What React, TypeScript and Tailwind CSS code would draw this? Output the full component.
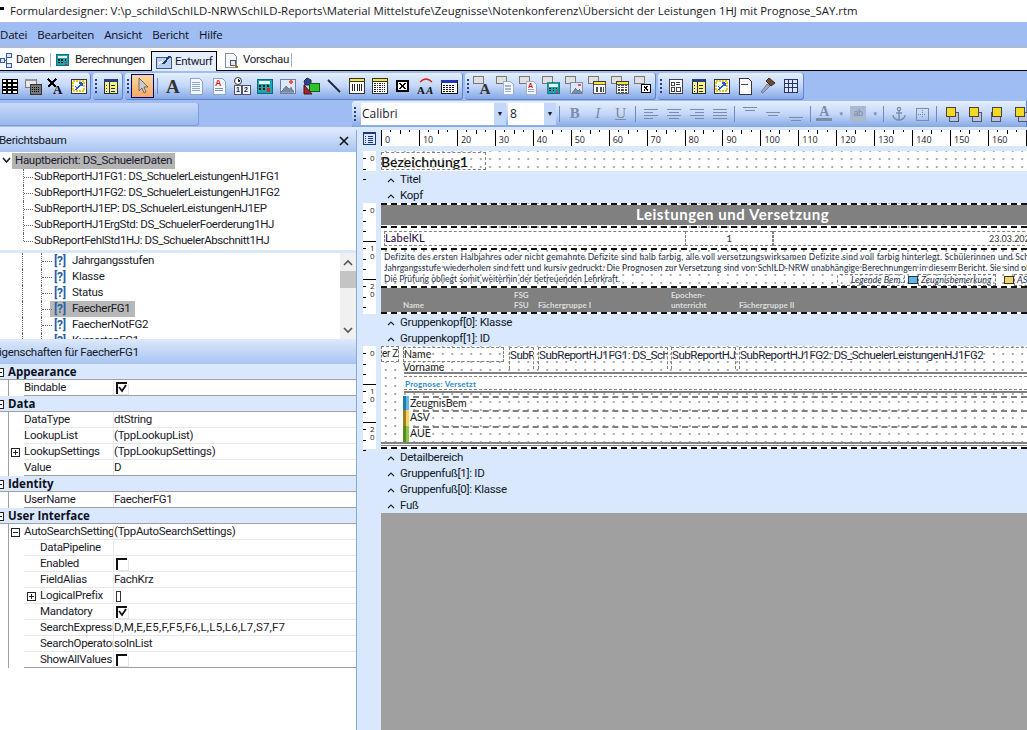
import React from 'react';

const segoe = "font-['Open_Sans',sans-serif] tracking-normal";
const ui = "font-['Roboto',sans-serif]";
const calibri = "font-['Lato',sans-serif] tracking-normal";

const Svg = ({ children }: { children: React.ReactNode }) => (
  <svg width="18" height="18" viewBox="0 0 18 18" shapeRendering="crispEdges">{children}</svg>
);

// toolbar icons
const IGrid = () => (
  <Svg>
    <rect x="1" y="2" width="15" height="14" fill="#fff" stroke="#000" />
    <path d="M1 6h15M1 10h15M1 13h15M6 2v14M11 2v14" stroke="#000" strokeWidth="1.4" />
  </Svg>
);
const ICalcWin = () => (
  <Svg>
    <rect x="1" y="2" width="11" height="8" fill="#e8e8e8" stroke="#777" />
    <rect x="1" y="2" width="11" height="2" fill="#999" />
    <rect x="6" y="7" width="11" height="10" fill="#777" stroke="#333" />
    <path d="M8 10h7M8 12h7M8 14h7" stroke="#000" strokeDasharray="1 1" />
  </Svg>
);
const IXA = () => (
  <Svg>
    <path d="M1 2l8 8M9 2l-8 8" stroke="#000" strokeWidth="1.8" />
    <text x="6" y="17" fontFamily="Liberation Serif" fontWeight="700" fontSize="13" fill="#000">A</text>
  </Svg>
);
const IVars = () => (
  <Svg>
    <rect x="1" y="2" width="15" height="14" fill="#fff" stroke="#333" />
    <path d="M3 4h11v10H3z" fill="none" stroke="#e8c820" strokeWidth="1.5" strokeDasharray="2 1" />
    <path d="M6 13l6-7M12 6H9M12 6v3M5 9l3 3" fill="none" stroke="#1c5fd0" strokeWidth="1.4" />
  </Svg>
);
const IColumns = () => (
  <Svg>
    <rect x="2" y="2" width="13" height="14" fill="#fff27a" stroke="#1c2a55" />
    <rect x="2" y="2" width="13" height="3" fill="#26407e" />
    <path d="M7 5v11M4 8h1M4 11h1M4 14h1M9 8h4M9 11h4M9 14h4" stroke="#1c2a55" />
  </Svg>
);
const IArrow = () => (
  <Svg>
    <path d="M5 1v13l3-3 2 5 2-1-2-5h4z" fill="#c8c8d0" stroke="#555" strokeWidth="0.8" shapeRendering="auto" />
  </Svg>
);
const IA = () => (
  <Svg>
    <text x="2" y="16" fontFamily="Liberation Serif" fontWeight="700" fontSize="19" fill="#333">A</text>
  </Svg>
);
const IDoc = () => (
  <Svg>
    <path d="M3 1h9l3 3v13H3z" fill="#f4f8ff" stroke="#8ea6c8" />
    <path d="M5 5h8M5 7h8M5 9h8M5 11h8M5 13h8" stroke="#8ea6c8" />
  </Svg>
);
const IDocA = () => (
  <Svg>
    <path d="M3 1h9l3 3v13H3z" fill="#f4f8ff" stroke="#8ea6c8" />
    <text x="5" y="9" fontFamily="Liberation Sans" fontWeight="700" fontSize="9" fill="#e01818">A</text>
    <path d="M5 11h8M5 13h8" stroke="#7a90c0" />
  </Svg>
);
const IClock = () => (
  <Svg>
    <circle cx="5" cy="4" r="3.5" fill="#fff" stroke="#333" shapeRendering="auto" />
    <path d="M5 2v2h2" stroke="#333" />
    <rect x="1" y="8" width="7" height="9" fill="#eef4ff" stroke="#556" />
    <rect x="9" y="8" width="8" height="9" fill="#eef4ff" stroke="#556" />
    <text x="3" y="15" fontFamily="Liberation Sans" fontWeight="700" fontSize="7" fill="#224">1</text>
    <text x="11" y="15" fontFamily="Liberation Sans" fontWeight="700" fontSize="7" fill="#224">2</text>
  </Svg>
);
const ICalc = () => (
  <Svg>
    <rect x="1" y="2" width="15" height="14" fill="#1aa6b0" stroke="#0c6a78" />
    <rect x="3" y="4" width="11" height="3" fill="#e8ffff" />
    <path d="M3 9h2M7 9h2M11 9h2M3 12h2M7 12h2" stroke="#111" strokeWidth="1.5" />
    <path d="M11 12h3M11 14h3" stroke="#e02020" strokeWidth="1.2" />
  </Svg>
);
const IImage = () => (
  <Svg>
    <rect x="1" y="2" width="15" height="14" fill="#dce8fa" stroke="#6c7ea0" />
    <path d="M2 15l5-6 3 3 2-2 3 5z" fill="#7a8aa0" stroke="#556" strokeWidth="0.5" />
    <circle cx="12" cy="5" r="1.7" fill="#e85a3a" />
  </Svg>
);
const IShapes = () => (
  <Svg>
    <path d="M2 4l3-3 4 2v5H3z" fill="#2a4488" stroke="#1c2a55" shapeRendering="auto" />
    <rect x="7" y="6" width="10" height="8" fill="#30c030" stroke="#106010" />
    <path d="M2 8v9h8z" fill="#a02828" stroke="#501010" shapeRendering="auto" />
  </Svg>
);
const ILine = () => (
  <Svg>
    <path d="M3 3l12 12" stroke="#1a2438" strokeWidth="1.8" shapeRendering="auto" />
  </Svg>
);
const IBars = () => (
  <Svg>
    <rect x="1" y="1" width="15" height="15" fill="#fff" stroke="#333" />
    <rect x="1" y="1" width="15" height="3" fill="#f5e53a" stroke="#333" />
    <path d="M4 7v7M6 7v7M9 7v7M11 7v7M13 7v7" stroke="#222" />
  </Svg>
);
const INoise = () => (
  <Svg>
    <rect x="1" y="1" width="15" height="15" fill="#fff" stroke="#333" />
    <rect x="1" y="1" width="15" height="3" fill="#f5e53a" stroke="#333" />
    <path d="M3 6h11M3 8h11M3 10h11M3 12h11M3 14h11" stroke="#222" strokeDasharray="2 1 1 1" />
  </Svg>
);
const IXBox = () => (
  <Svg>
    <rect x="3" y="4" width="11" height="10" fill="#fff" stroke="#000" strokeWidth="1.4" />
    <path d="M6 6l5 6M11 6l-5 6" stroke="#000" strokeWidth="1.5" />
  </Svg>
);
const IAA = () => (
  <Svg>
    <path d="M3 5Q9 -1 15 5" fill="none" stroke="#e01818" strokeWidth="1.2" shapeRendering="auto" />
    <text x="0" y="17" fontFamily="Liberation Serif" fontWeight="700" fontSize="11" fill="#111">A</text>
    <text x="9" y="17" fontFamily="Liberation Serif" fontStyle="italic" fontWeight="700" fontSize="11" fill="#111">A</text>
  </Svg>
);
const ICal = () => (
  <Svg>
    <rect x="1" y="3" width="16" height="13" fill="#fff" stroke="#111" />
    <rect x="1" y="3" width="16" height="3" fill="#2038b0" />
    <path d="M3 8h12M3 10h12M3 12h12M3 14h12" stroke="#111" strokeDasharray="2 1" />
  </Svg>
);
// gray window behind the data-aware variants
const Stacked = ({ children }: { children: React.ReactNode }) => (
  <span className="relative block h-[20px] w-[20px]">
    <span className="absolute left-0 top-0 h-[8px] w-[11px] border border-[#777] bg-[#e0e0e0]" />
    <span className="absolute left-[5px] top-[5px] block h-[18px] w-[18px] origin-top-left scale-[0.8]">{children}</span>
  </span>
);
const ICard = () => (
  <Svg>
    <rect x="2" y="2" width="13" height="14" fill="#fff" stroke="#444" />
    <path d="M4 5h3v3H4zM9 5h4M9 7h4M4 10h3v4H4zM9 10h4v4H9z" fill="none" stroke="#445" />
  </Svg>
);
const IPage = () => (
  <Svg>
    <path d="M3 1h9l3 3v13H3z" fill="#fff" stroke="#334" />
    <path d="M5 7l1 1 1-1 1 1 1-1 1 1 1-1 1 1" fill="none" stroke="#445" />
  </Svg>
);
const IBrush = () => (
  <Svg>
    <path d="M10 1l6 5-4 3-5-5z" fill="#6b4a30" stroke="#3a2818" shapeRendering="auto" />
    <path d="M8 7l3 2-7 7-2-1z" fill="#9aa8c0" stroke="#556" strokeWidth="0.6" shapeRendering="auto" />
  </Svg>
);
const ITable = () => (
  <Svg>
    <rect x="2" y="2" width="13" height="13" fill="#dbe6fa" stroke="#26336e" />
    <path d="M2 6.5h13M2 10.5h13M6.5 2v13M10.5 2v13" stroke="#26336e" />
  </Svg>
);

const Btn = ({ children, active }: { children?: React.ReactNode; active?: boolean }) => (
  <div
    className={`flex h-[24px] w-[23px] shrink-0 items-center justify-center ${
      active ? 'border border-[#000080] bg-gradient-to-b from-[#fdd9a0] to-[#f8a860]' : ''
    }`}
  >
    {children}
  </div>
);
const Grip = () => (
  <div className="ml-[2px] mr-[1px] flex h-[14px] w-[3px] shrink-0 flex-col justify-between">
    {[0, 1, 2, 3].map((i) => (
      <span key={i} className="h-[2px] w-[2px] bg-[#27418a]" />
    ))}
  </div>
);
const Sep = () => <div className="mx-[3px] h-[16px] w-px shrink-0 bg-[#6a8cc8]" />;

const barClass =
  'flex h-[27px] items-center rounded-r-[3px] border-b border-r border-[#5f85c8] bg-gradient-to-b from-[#e4eefd] via-[#c3d7f8] to-[#86a8e6]';

const Ruler = () => (
  <div className="flex h-[16px] min-w-0 flex-1 overflow-hidden bg-white">
    {Array.from({ length: 18 }, (_, i) => i * 10).map((n) => (
      <div key={n} className="relative h-full w-[37.95px] shrink-0 border-l border-black">
        <div className="flex h-[5px] items-start justify-evenly">
          <span className="h-[2px] w-px bg-black" />
          <span className="h-[4px] w-px bg-black" />
          <span className="h-[2px] w-px bg-black" />
        </div>
        <span className={`${segoe} block pl-[3px] text-[9px] leading-[10px] text-[#222]`}>{n}</span>
      </div>
    ))}
  </div>
);

const Chevron = () => (
  <svg width="8" height="6" viewBox="0 0 8 6" className="mr-[5px]">
    <path d="M1 5l3-3 3 3" fill="none" stroke="#1a2438" strokeWidth="1.1" />
  </svg>
);
const Section = ({ label }: { label: string }) => (
  <div className={`${ui} flex h-[16px] items-center pl-[27px] pt-[2px] text-[11.5px] leading-none text-[#111827]`}>
    <Chevron />
    <span>{label}</span>
  </div>
);

// marks of the vertical ruler next to a report band
const VRuler = ({ height, marks }: { height: number; marks: number }) => (
  <div className="relative ml-[3px] w-[13px] shrink-0 bg-white" style={{ height }}>
    {Array.from({ length: marks }, (_, m) => (
      <React.Fragment key={m}>
        {m > 0 && (
          <>
            <span className="absolute left-0 h-px w-full bg-black" style={{ top: 38 * m }} />
            <span className={`${segoe} absolute left-[7px] text-[8px] leading-[9px]`} style={{ top: 38 * m + 2 }}>{m}</span>
          </>
        )}
        <span className={`${segoe} absolute left-[7px] text-[8px] leading-[9px]`} style={{ top: 38 * m + (m ? 10 : 2) }}>0</span>
        {[7, 18, 28].map((t) => (
          <span key={t} className="absolute left-0 h-px w-[3px] bg-black" style={{ top: 38 * m + t }} />
        ))}
      </React.Fragment>
    ))}
  </div>
);

const dots =
  'bg-white bg-[radial-gradient(circle,#666_0.6px,transparent_0.8px)] bg-[length:9.5px_8px] bg-[position:0_-4px]';
const box = 'absolute border border-dashed border-[#808080]';
const blackDash = 'absolute left-0 right-0 h-0 border-t-2 border-dashed border-[#111]';
const grayRule = 'absolute left-[23px] right-0 h-[2px] bg-[#808080]';

const HeadBand = () => (
  <div className={`${calibri} relative h-[111px] min-w-0 flex-1 overflow-hidden ${dots}`}>
    <div className={`${blackDash} top-0`} />
    <div className="absolute left-0 right-0 top-[2px] flex h-[20px] items-center bg-[#808080] pb-[2px] pl-[255px]">
      <span className="whitespace-nowrap text-[15px] font-bold tracking-[0.55px] text-white">Leistungen und Versetzung</span>
    </div>
    <div className={`${blackDash} top-[23px]`} />
    <div className={`${box} left-[3px] top-[28px] h-[15px] w-[302px] bg-white text-[11px] leading-[11px] tracking-[0.2px] text-[#200040]`}>LabelKL</div>
    <div className={`${box} left-[304px] top-[28px] flex h-[15px] w-[88px] justify-end bg-white pr-[40px] text-[10px] leading-[13px] text-[#333]`}>1</div>
    <div className={`${box} left-[392px] top-[28px] h-[15px] w-[272px] whitespace-nowrap bg-white pl-[215px] text-[9px] leading-[13px] text-[#333]`}>23.03.2021</div>
    <div className={`${blackDash} top-[45px]`} />
    <div className="absolute left-[3px] top-[49px] whitespace-nowrap text-[8.5px] leading-[11px] text-[#26304a]">
      <div className="tracking-[0.21px]">Defizite des ersten Halbjahres oder nicht gemahnte Defizite sind halb farbig, alle voll versetzungswirksamen Defizite sind voll farbig hinterlegt. Schülerinnen und Schül</div>
      <div className="tracking-[0.1px]">Jahrgangsstufe wiederholen sind fett und kursiv gedruckt. Die Prognosen zur Versetzung sind von SchILD-NRW unabhängige Berechnungen in diesem Bericht. Sie sind oh</div>
      <div className="tracking-[0.02px]">Die Prüfung obliegt somit weiterhin der betreuenden Lehrkraft.</div>
    </div>
    <div className={`${box} left-[456px] top-[71px] h-[12px] w-[68px] rounded-[3px]`} />
    <span className="absolute left-[470px] top-[72px] whitespace-nowrap text-[9px] italic leading-[10px] text-[#26304a]">Legende Bem.:</span>
    <span className="absolute left-[527px] top-[73px] h-[8px] w-[10px] border border-[#333] bg-[#62b6ee]" />
    <div className={`${box} left-[537px] top-[71px] h-[12px] w-[78px]`} />
    <span className="absolute left-[540px] top-[72px] whitespace-nowrap text-[9px] italic leading-[10px] text-[#26304a]">Zeugnisbemerkung</span>
    <span className="absolute left-[623px] top-[73px] h-[8px] w-[10px] border border-[#333] bg-[#f4d566]" />
    <div className={`${box} left-[633px] top-[71px] h-[12px] w-[40px]`} />
    <span className="absolute left-[636px] top-[72px] whitespace-nowrap text-[9px] italic leading-[10px] text-[#26304a]">ASV</span>
    <div className={`${blackDash} top-[83px]`} />
    <div className="absolute left-0 right-0 top-[85px] h-[24px] bg-[#808080] text-[8px] font-bold leading-[10px] text-[#dddddd]">
      <span className="absolute left-[22px] top-[12px]">Name</span>
      <span className="absolute left-[133px] top-[2px]">FSG<br />FSU</span>
      <span className="absolute left-[157px] top-[12px] whitespace-nowrap">Fächergruppe I</span>
      <span className="absolute left-[290px] top-[2px] whitespace-nowrap">Epochen-<br />unterricht</span>
      <span className="absolute left-[358px] top-[12px] whitespace-nowrap">Fächergruppe II</span>
    </div>
    <div className={`${blackDash} top-[109px]`} />
  </div>
);

const Strip = ({ top, dark, light, label }: { top: number; dark: string; light: string; label: string }) => (
  <div className={`${calibri} absolute left-[22px] right-0 flex h-[15px] items-start border-t-2 border-dashed border-[#808080]`} style={{ top }}>
    <span className="-mt-[2px] h-[16px] w-[3px] shrink-0" style={{ background: dark }} />
    <span className="-mt-[2px] h-[16px] w-[3px] shrink-0" style={{ background: light }} />
    <span className="pl-[1px] text-[10.5px] leading-[11px] text-[#222]">{label}</span>
  </div>
);

const sub = `${box} top-[1px] h-[22px] overflow-hidden whitespace-nowrap border-b-0 text-[11.5px] leading-[14px] tracking-[-0.45px] text-[#1a2438]`;

const GroupBand = () => (
  <div className={`${ui} relative h-[103px] min-w-0 flex-1 overflow-hidden ${dots}`}>
    <div className={`${box} left-0 top-0 h-[16px] w-[18px] overflow-hidden whitespace-nowrap bg-white text-[10px] leading-[14px] text-[#222]`}>er Z</div>
    <div className={`${calibri} ${box} left-[22px] top-[1px] h-[15px] w-[101px] text-[10.5px] leading-[13px] text-[#222]`}>Name</div>
    <div className={`${calibri} absolute left-[22px] top-[15px] text-[10.5px] leading-[13px] text-[#222]`}>Vorname</div>
    <div className={`${sub} left-[128px] w-[25px]`}>SubR</div>
    <div className={`${sub} left-[157px] w-[130px]`}>SubReportHJ1FG1: DS_Sch</div>
    <div className={`${sub} left-[290px] w-[65px]`}>SubReportHJ</div>
    <div className={`${sub} left-[358px] w-[300px]`}>SubReportHJ1FG2: DS_SchuelerLeistungenHJ1FG2</div>
    <div className={`${grayRule} top-[26px]`} />
    <div className="absolute left-[23px] right-0 top-[30px] h-[14px] border-y border-dashed border-[#808080] bg-white" />
    <div className={`${calibri} absolute left-[24px] top-[33px] text-[8px] font-bold leading-[10px] text-[#1f8ac8]`}>
      <span className="tracking-[0.25px]">Prognose: Versetzt</span>
    </div>
    <div className={`${grayRule} top-[45px]`} />
    <Strip top={50} dark="#1e7fa0" light="#62b6ee" label="ZeugnisBem" />
    <Strip top={64} dark="#a08018" light="#f4d566" label="ASV" />
    <Strip top={80} dark="#5a8a18" light="#8cc850" label="AUE" />
    <div className="absolute left-0 right-0 top-[96px] h-[2px] bg-[#808080]" />
    <div className="absolute left-0 right-0 top-[99px] h-px bg-[#808080]" />
    <div className={`${blackDash} top-[101px]`} />
  </div>
);

type Prop = { name: string; value?: React.ReactNode; indent?: number; plus?: 'plus' | 'minus'; end?: boolean };

const Check = ({ on }: { on?: boolean }) => (
  <svg width="13" height="13" viewBox="0 0 13 13" className="ml-[2px]" shapeRendering="crispEdges">
    <path d="M1 12V1h10" fill="none" stroke="#111" strokeWidth="2" />
    <path d="M12 2v10H2" fill="none" stroke="#e4e4e4" />
    {on && <path d="M3 5l3 4 4-6" fill="none" stroke="#111" strokeWidth="1.8" shapeRendering="auto" />}
  </svg>
);
const Expand = ({ minus }: { minus?: boolean }) => (
  <svg width="9" height="9" viewBox="0 0 9 9" shapeRendering="crispEdges" className="shrink-0">
    <rect x="0.5" y="0.5" width="8" height="8" fill="#fff" stroke="#222" />
    <path d={minus ? 'M2 4.5h5' : 'M2 4.5h5M4.5 2v5'} stroke="#222" />
  </svg>
);

const Row = ({ name, value, indent = 0, plus, end }: Prop) => (
  <div className={`flex h-[16px] border-b ${end ? 'border-[#a0a0a0]' : 'border-[#e8e8e8]'} bg-white pt-[1px]`}>
    <div className="flex w-[89px] shrink-0 items-center overflow-hidden whitespace-nowrap" style={{ paddingLeft: indent }}>
      {plus && <span className="absolute"><span className="-ml-[13px] block"><Expand minus={plus === 'minus'} /></span></span>}
      <span>{name}</span>
    </div>
    <div className="flex min-w-0 flex-1 items-center overflow-hidden whitespace-nowrap border-l border-[#e8e8e8]">{value}</div>
  </div>
);

const Category = ({ name }: { name: string }) => (
  <div className={`${segoe} flex h-[16px] items-center border-b border-[#a0a0a0] bg-[#d9e8fd] pt-[1px] font-bold text-[#0c1020]`}>
    <span className="-ml-[5px] mr-[4px]"><Expand minus /></span>
    <span>{name}</span>
  </div>
);

const TreeRow = ({ label, last }: { label: string; last?: boolean }) => (
  <div className="relative flex h-[16px] items-center pl-[34px]">
    <span className={`absolute left-[23px] top-0 w-0 border-l border-dotted border-[#666] ${last ? 'h-[8px]' : 'h-[16px]'}`} />
    <span className="absolute left-[24px] top-[8px] w-[9px] border-t border-dotted border-[#666]" />
    <span className="whitespace-nowrap tracking-[-0.4px]">{label}</span>
  </div>
);

const FieldRow = ({ label, selected }: { label: string; selected?: boolean }) => (
  <div className="relative flex h-[16px] items-center pl-[54px]">
    <span className="absolute left-[22px] top-0 h-[16px] w-0 border-l border-dotted border-[#666]" />
    <span className="absolute left-[41px] top-0 h-[16px] w-0 border-l border-dotted border-[#666]" />
    <span className="absolute left-[42px] top-[8px] w-[10px] border-t border-dotted border-[#666]" />
    <span className={`flex h-[16px] items-center ${selected ? '-ml-[4px] bg-[#b8b8b8] pl-[4px] pr-[4px]' : ''}`}>
      <span className="mr-[7px] w-[11px] text-center text-[12px] font-bold leading-none text-[#2b5fa8]">[?]</span>
      <span className="whitespace-nowrap">{label}</span>
    </span>
  </div>
);

const PaneHeader = ({ children }: { children: React.ReactNode }) => (
  <div className="flex items-center justify-between bg-gradient-to-b from-[#dde9fc] to-[#a8c4f2] pr-[7px] text-[#111827]">{children}</div>
);

const AlignIcon = ({ rows }: { rows: string[] }) => (
  <svg width="16" height="14" viewBox="0 0 16 14" shapeRendering="crispEdges">
    <path d={rows.join('')} stroke="#7d8ba8" />
  </svg>
);

export default function App() {
  return (
    <div className={`${ui} flex h-[730px] w-[1027px] flex-col overflow-hidden bg-white text-[11.5px] leading-none tracking-[-0.3px] text-[#1a1a2a]`}>
      {/* Titlebar */}
      <div className={`${segoe} flex h-[22px] shrink-0 items-center whitespace-nowrap text-[11.4px]`}>
        <span className="mb-[6px] ml-0 mr-[6px] h-[3px] w-[4px] bg-black" />
        Formulardesigner: V:\p_schild\SchILD-NRW\SchILD-Reports\Material Mittelstufe\Zeugnisse\Notenkonferenz\Übersicht der Leistungen 1HJ mit Prognose_SAY.rtm
      </div>

      {/* Menu */}
      <div className="flex h-[26px] shrink-0 items-center gap-[10px] border-b border-[#b8b8b8] bg-[#a0bdf3] font-['Open_Sans',sans-serif] tracking-[-0.2px] text-[#0c1020]">
        <span>Datei</span>
        <span>Bearbeiten</span>
        <span>Ansicht</span>
        <span>Bericht</span>
        <span>Hilfe</span>
      </div>

      {/* Tabs */}
      <div className="flex h-[23px] shrink-0 items-end border-b border-black bg-white pb-0">
        <div className="flex h-[20px] w-[50px] shrink-0 items-center gap-[4px]">
          <svg width="12" height="16" viewBox="0 0 12 16" shapeRendering="crispEdges">
            <path d="M0 6h4v4H0zM6 1h5v4H6zM6 11h5v4H6z" fill="#dbe6fa" stroke="#3a5aa0" />
            <path d="M4 8h2M6 5v6" stroke="#3a5aa0" />
          </svg>
          Daten
        </div>
        <span className="mb-[3px] h-[14px] w-px shrink-0 bg-[#b0b0b0]" />
        <div className="flex h-[20px] w-[100px] shrink-0 items-center gap-[3px] pl-[3px]">
          <span className="block h-[18px] w-[18px] shrink-0 scale-[0.85]"><ICalc /></span>
          Berechnungen
        </div>
        <div className="-mb-px flex h-[20px] w-[66px] shrink-0 items-center gap-[3px] border border-b-0 border-black bg-[#e4eefd] pl-[3px]">
          <svg width="17" height="15" viewBox="0 0 17 15" shapeRendering="crispEdges">
            <rect x="1" y="3" width="15" height="11" fill="#bcd0f0" stroke="#3a5aa0" />
            <path d="M3 11l5-5M3 8h5" stroke="#fff" />
            <path d="M8 10l7-8" stroke="#2a3a70" strokeWidth="2" />
          </svg>
          Entwurf
        </div>
        <div className="flex h-[20px] w-[74px] shrink-0 items-center gap-[4px] pl-[6px]">
          <svg width="16" height="17" viewBox="0 0 16 17" shapeRendering="crispEdges">
            <path d="M2 1h8l3 3v11H2z" fill="#f8f8fc" stroke="#8090a8" />
            <circle cx="10" cy="11" r="3" fill="#dde8f8" stroke="#556" />
            <path d="M12 13l3 3" stroke="#a07020" strokeWidth="2" />
          </svg>
          Vorschau
        </div>
        <span className="mb-[3px] h-[14px] w-px shrink-0 bg-[#b0b0b0]" />
      </div>

      {/* Toolbar row 1 */}
      <div className="flex h-[30px] shrink-0 items-center gap-[2px] bg-[#a0bdf3]">
        <div className={`${barClass} -ml-[2px] w-[93px]`}>
          <Btn><IGrid /></Btn>
          <Btn><ICalcWin /></Btn>
          <Btn><IXA /></Btn>
          <Btn><IVars /></Btn>
        </div>
        <div className={`${barClass} w-[30px] rounded-l-[3px]`}>
          <Grip />
          <Btn><IColumns /></Btn>
        </div>
        <div className={`${barClass} w-[338px] rounded-l-[3px]`}>
          <Grip />
          <Btn active><IArrow /></Btn>
          <Sep />
          <Btn><IA /></Btn>
          <Btn><IDoc /></Btn>
          <Btn><IDocA /></Btn>
          <Btn><IClock /></Btn>
          <Btn><ICalc /></Btn>
          <Btn><IImage /></Btn>
          <Btn><IShapes /></Btn>
          <Btn><ILine /></Btn>
          <Btn><IBars /></Btn>
          <Btn><INoise /></Btn>
          <Btn><IXBox /></Btn>
          <Btn><IAA /></Btn>
          <Btn><ICal /></Btn>
        </div>
        <div className={`${barClass} w-[191px] rounded-l-[3px]`}>
          <Grip />
          <Btn><Stacked><IA /></Stacked></Btn>
          <Btn><Stacked><IDoc /></Stacked></Btn>
          <Btn><Stacked><IDocA /></Stacked></Btn>
          <Btn><Stacked><ICalc /></Stacked></Btn>
          <Btn><Stacked><IImage /></Stacked></Btn>
          <Btn><Stacked><IBars /></Stacked></Btn>
          <Btn><Stacked><INoise /></Stacked></Btn>
          <Btn><Stacked><IXBox /></Stacked></Btn>
        </div>
        <div className={`${barClass} w-[146px] rounded-l-[3px]`}>
          <Grip />
          <Btn><ICard /></Btn>
          <Btn><IColumns /></Btn>
          <Btn><IVars /></Btn>
          <Btn><IPage /></Btn>
          <Btn><IBrush /></Btn>
          <Btn><ITable /></Btn>
        </div>
      </div>

      {/* Toolbar row 2 */}
      <div className="flex h-[26px] shrink-0 items-center justify-between bg-[#a0bdf3]">
        <div className="h-[23px] w-[199px] rounded-r-[3px] border-b border-r border-[#7c9cd8] bg-gradient-to-b from-[#c6d9f8] to-[#9ab8ec]" />
        <div className={`${barClass} h-[26px] w-[675px] rounded-l-[3px] rounded-r-none`}>
          <Grip />
          <div className={`${segoe} ml-[3px] flex h-[22px] w-[145px] shrink-0 items-center justify-between bg-white pl-[1px] text-[12px]`}>
            Calibri
            <span className="flex h-full w-[12px] items-center justify-center bg-[#c3d7f8] text-[7px]">▼</span>
          </div>
          <div className={`${segoe} ml-[2px] flex h-[22px] w-[48px] shrink-0 items-center justify-between bg-white pl-[2px] text-[12px]`}>
            8
            <span className="flex h-full w-[12px] items-center justify-center bg-[#c3d7f8] text-[7px]">▼</span>
          </div>
          <Sep />
          <div className="flex font-['Liberation_Serif',serif] text-[15px] text-[#7d8ba8]">
            <Btn><b>B</b></Btn>
            <Btn><i>I</i></Btn>
            <Btn><u>U</u></Btn>
          </div>
          <Sep />
          <Btn><AlignIcon rows={['M1 2.5h14', 'M1 5.5h9', 'M1 8.5h14', 'M1 11.5h9']} /></Btn>
          <Btn><AlignIcon rows={['M1 2.5h14', 'M3 5.5h10', 'M1 8.5h14', 'M3 11.5h10']} /></Btn>
          <Btn><AlignIcon rows={['M1 2.5h14', 'M6 5.5h9', 'M1 8.5h14', 'M6 11.5h9']} /></Btn>
          <Btn><AlignIcon rows={['M1 2.5h14', 'M1 5.5h14', 'M1 8.5h14', 'M1 11.5h14']} /></Btn>
          <Sep />
          <Btn><AlignIcon rows={['M1 0.5h14', 'M3 3.5h10']} /></Btn>
          <Btn><AlignIcon rows={['M1 5.5h14', 'M3 8.5h10']} /></Btn>
          <Btn><AlignIcon rows={['M1 10.5h14', 'M3 13.5h10']} /></Btn>
          <Sep />
          <div className="flex w-[32px] shrink-0 items-center justify-center gap-[6px]">
            <span className="flex flex-col items-center font-['Liberation_Serif',serif] text-[14px] font-bold leading-[12px] text-[#7d8ba8]">
              A<span className="h-[3px] w-[16px] bg-[#7d8ba8]" />
            </span>
            <span className="text-[6px] text-[#7d8ba8]">▼</span>
          </div>
          <div className="ml-[2px] flex w-[32px] shrink-0 items-center justify-center gap-[6px]">
            <span className="flex h-[16px] w-[16px] items-center justify-center bg-[#aab8d0] text-[9px] text-[#7d8ba8]">ab</span>
            <span className="text-[6px] text-[#7d8ba8]">▼</span>
          </div>
          <Sep />
          <Btn>
            <svg width="16" height="16" viewBox="0 0 16 16">
              <circle cx="8" cy="3" r="1.6" fill="none" stroke="#7d8ba8" strokeWidth="1.2" />
              <path d="M8 5v9M2 9c0 3 3 5 6 5s6-2 6-5M5 7h6" fill="none" stroke="#7d8ba8" strokeWidth="1.4" />
            </svg>
          </Btn>
          <Btn>
            <svg width="14" height="14" viewBox="0 0 14 14" shapeRendering="crispEdges">
              <rect x="1" y="1" width="12" height="12" fill="none" stroke="#7d8ba8" />
              <path d="M7 3v8M3 7h8" stroke="#7d8ba8" strokeDasharray="1 1" />
            </svg>
          </Btn>
          <Sep />
          {[0, 1, 2, 3].map((i) => (
            <Btn key={i}>
              <svg width="16" height="16" viewBox="0 0 16 16" shapeRendering="crispEdges">
                <rect x={i === 2 ? 1 : 5} y={6} width="9" height="9" fill="#b8c4dc" stroke="#556" />
                <rect x="2" y="1" width="9" height="9" fill="#f5d820" stroke="#444" />
              </svg>
            </Btn>
          ))}
        </div>
      </div>

      {/* Workspace */}
      <div className="flex min-h-0 flex-1 bg-[#d9e8fd] pt-[3px]">
        {/* Left panes */}
        <div className="flex h-full w-[356px] shrink-0 flex-col overflow-hidden bg-white">
          <PaneHeader>
            <div className="flex h-[22px] w-full items-center justify-between">
              <span className="-ml-[1px]">Berichtsbaum</span>
              <svg width="10" height="10" viewBox="0 0 10 10">
                <path d="M1 1l8 8M9 1l-8 8" stroke="#111" strokeWidth="1.6" />
              </svg>
            </div>
          </PaneHeader>
          <div className="h-[98px] shrink-0 overflow-hidden">
            <div className="relative flex h-[17px] items-center pl-[2px]">
              <svg width="9" height="7" viewBox="0 0 9 7">
                <path d="M1 1l3.5 4L8 1" fill="none" stroke="#222" strokeWidth="1.6" />
              </svg>
              <span className="ml-[1px] flex h-[16px] items-center bg-[#b4b4b4] px-[3px]">Hauptbericht: DS_SchuelerDaten</span>
            </div>
            <TreeRow label="SubReportHJ1FG1: DS_SchuelerLeistungenHJ1FG1" />
            <TreeRow label="SubReportHJ1FG2: DS_SchuelerLeistungenHJ1FG2" />
            <TreeRow label="SubReportHJ1EP: DS_SchuelerLeistungenHJ1EP" />
            <TreeRow label="SubReportHJ1ErgStd: DS_SchuelerFoerderung1HJ" />
            <TreeRow label="SubReportFehlStd1HJ: DS_SchuelerAbschnitt1HJ" last />
          </div>
          <div className="h-[3px] shrink-0 bg-[#d9e8fd]" />
          <div className="flex h-[86px] shrink-0 overflow-hidden">
            <div className="min-w-0 flex-1">
              <FieldRow label="Jahrgangsstufen" />
              <FieldRow label="Klasse" />
              <FieldRow label="Status" />
              <FieldRow label="FaecherFG1" selected />
              <FieldRow label="FaecherNotFG2" />
              <FieldRow label="KursartenFG1" />
            </div>
            <div className="flex w-[16px] shrink-0 flex-col items-center bg-[#f0f0f0]">
              <svg width="10" height="18" viewBox="0 0 10 18"><path d="M1 12l4-4 4 4" fill="none" stroke="#555" strokeWidth="1.6" /></svg>
              <div className="h-[17px] w-full bg-[#c4c4c4]" />
              <div className="flex-1" />
              <svg width="10" height="14" viewBox="0 0 10 14"><path d="M1 3l4 4 4-4" fill="none" stroke="#555" strokeWidth="1.6" /></svg>
            </div>
          </div>
          <PaneHeader>
            <div className="flex h-[25px] w-full items-center pt-[3px]">
              <span className="-ml-[1px] whitespace-nowrap">igenschaften für FaecherFG1</span>
            </div>
          </PaneHeader>
          {/* Properties */}
          <div className="flex flex-col">
            <Category name="Appearance" />
            <Indent><Row name="Bindable" value={<Check on />} end /></Indent>
            <Category name="Data" />
            <Indent>
              <Row name="DataType" value="dtString" />
              <Row name="LookupList" value="(TppLookupList)" />
              <Row name="LookupSettings" value="(TppLookupSettings)" plus="plus" />
              <Row name="Value" value="D" end />
            </Indent>
            <Category name="Identity" />
            <Indent><Row name="UserName" value="FaecherFG1" end /></Indent>
            <Category name="User Interface" />
            <Indent>
              <Row name="AutoSearchSettings" value="(TppAutoSearchSettings)" plus="minus" />
              <Row name="DataPipeline" indent={16} />
              <Row name="Enabled" indent={16} value={<Check />} />
              <Row name="FieldAlias" indent={16} value="FachKrz" />
              <Row name="LogicalPrefix" indent={16} plus="plus" value={<span className="ml-[2px] inline-block h-[11px] w-[5px] border border-[#333]" />} />
              <Row name="Mandatory" indent={16} value={<Check on />} />
              <Row name="SearchExpression" indent={16} value={<span className="tracking-[0.2px]">D,M,E,E5,F,F5,F6,L,L5,L6,L7,S7,F7</span>} />
              <Row name="SearchOperator" indent={16} value="soInList" />
              <Row name="ShowAllValues" indent={16} value={<Check />} end />
            </Indent>
          </div>
        </div>

        {/* Splitter */}
        <div className="h-full w-[4px] shrink-0 border-l border-[#88a8e0] bg-[#d9e8fd]" />

        {/* Designer */}
        <div className="flex h-full min-w-0 flex-1 flex-col bg-[#d9e8fd]">
          <div className="flex shrink-0 items-center">
            <div className="flex w-[21px] shrink-0 justify-center pr-[3px]">
              <svg width="14" height="14" viewBox="0 0 14 14" shapeRendering="crispEdges">
                <rect x="1" y="1" width="12" height="12" fill="#dbe6fa" stroke="#1c3a80" />
                <rect x="1" y="1" width="12" height="2" fill="#1c3a80" />
                <path d="M3 5h1M3 7h1M3 9h1M3 11h1M6 5h5M6 7h5M6 9h5M6 11h5" stroke="#1c3a80" />
              </svg>
            </div>
            <Ruler />
          </div>
          <div className="h-[5px] shrink-0" />
          <div className="flex shrink-0">
            <VRuler height={20} marks={1} />
            <div className="w-[5px] shrink-0" />
            <div className={`${calibri} relative h-[20px] min-w-0 flex-1 overflow-hidden ${dots}`}>
              <div className={`${box} left-0 top-[1px] h-[18px] w-[105px] -indent-[1px] whitespace-nowrap text-[14px] font-semibold leading-[17px] text-[#111]`}>Bezeichnung1</div>
            </div>
          </div>
          <Section label="Titel" />
          <Section label="Kopf" />
          <div className="flex shrink-0">
            <VRuler height={111} marks={3} />
            <div className="w-[5px] shrink-0" />
            <HeadBand />
          </div>
          <Section label="Gruppenkopf[0]: Klasse" />
          <Section label="Gruppenkopf[1]: ID" />
          <div className="flex shrink-0">
            <VRuler height={103} marks={3} />
            <div className="w-[5px] shrink-0" />
            <GroupBand />
          </div>
          <Section label="Detailbereich" />
          <Section label="Gruppenfuß[1]: ID" />
          <Section label="Gruppenfuß[0]: Klasse" />
          <Section label="Fuß" />
          <div className="ml-[21px] min-h-0 flex-1 bg-[#a0a0a0]" />
        </div>
      </div>
    </div>
  );
}

function Indent({ children }: { children: React.ReactNode }) {
  return <div className="ml-[8px] border-l border-[#a0a0a0] pl-[15px]">{children}</div>;
}
